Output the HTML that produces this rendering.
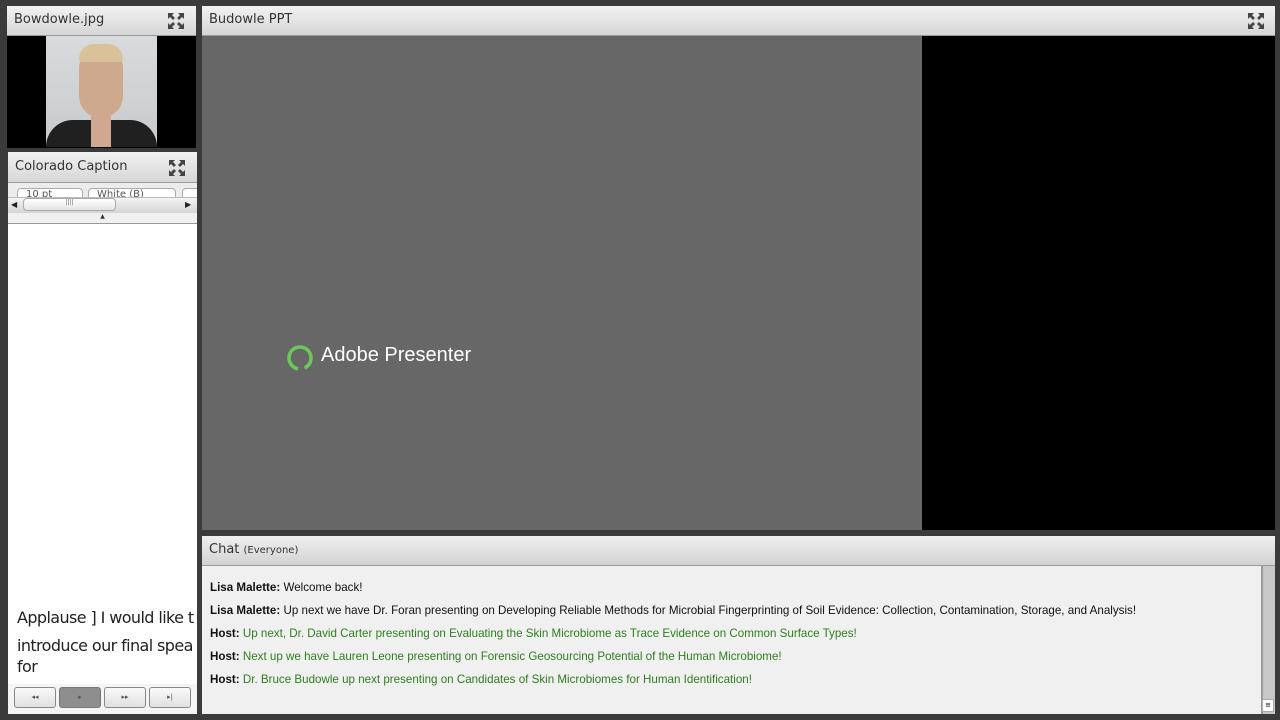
<!DOCTYPE html>
<html><head><style>
body{margin:0;width:1280px;height:720px;background:#3b3b3b;position:relative;overflow:hidden;font-family:"DejaVu Sans","Liberation Sans",sans-serif}
div{position:absolute;box-sizing:border-box}
.hdr{background:linear-gradient(#f2f2f2,#d6d6d6);border-bottom:1px solid #9a9a9a;color:#333;font-size:13px;padding-left:7px;line-height:28px}
.exp{width:18px;height:18px}
.chat{font-family:"Liberation Sans",sans-serif;font-size:11.6px;color:#111;left:8px;white-space:nowrap}
.chat b{font-weight:bold}
.g{color:#2e7d1e}
.btn{top:687px;height:21px;width:42px;border:1px solid #888;border-radius:3px;background:linear-gradient(#fafafa,#e0e0e0);font-size:7px;color:#555;text-align:center;line-height:19px}
</style></head><body>
<svg width="0" height="0" style="position:absolute"><defs><g id="ex"><path d="M1 1h6l-2 2 3 3-2 2-3-3-2 2zM17 1h-6l2 2-3 3 2 2 3-3 2 2zM1 17h6l-2-2 3-3-2-2-3 3-2-2zM17 17h-6l2-2-3-3 2-2 3 3 2-2z" fill="#444"/></g></defs></svg>

<!-- photo panel -->
<div style="left:7px;top:6px;width:189px;height:142px;background:#000">
 <div class="hdr" style="left:0;top:0;width:189px;height:30px;line-height:28px">Bowdowle.jpg</div>
 <svg class="exp" style="position:absolute;left:160px;top:6px" viewBox="0 0 18 18"><use href="#ex"/></svg>
 <div style="left:39px;top:30px;width:111px;height:111px;background:linear-gradient(#d8dadc,#c8cacc)">
  <div style="left:33px;top:12px;width:44px;height:70px;border-radius:22px 22px 24px 24px;background:#cfa98e"></div>
  <div style="left:33px;top:8px;width:44px;height:18px;border-radius:20px 20px 4px 4px;background:#d9c19a"></div>
  <div style="left:0;top:84px;width:111px;height:27px;border-radius:30px 30px 0 0;background:#202020"></div>
  <div style="left:45px;top:80px;width:20px;height:31px;background:#d0a890"></div>
 </div>
</div>

<!-- caption panel -->
<div style="left:8px;top:152px;width:189px;height:562px;background:#fff">
 <div class="hdr" style="left:0;top:0;width:189px;height:31px;line-height:30px">Colorado Caption</div>
 <svg class="exp" style="position:absolute;left:160px;top:7px" viewBox="0 0 18 18"><use href="#ex"/></svg>
 <div style="left:0;top:31px;width:189px;height:30px;background:#ececec;overflow:hidden">
  <div style="left:9px;top:5px;width:66px;height:16px;border:1px solid #aaa;border-radius:4px;background:#fff;font-size:10px;color:#555;padding-left:8px">10 pt</div>
  <div style="left:80px;top:5px;width:88px;height:16px;border:1px solid #aaa;border-radius:4px;background:#fff;font-size:10px;color:#555;padding-left:8px">White (B)</div>
  <div style="left:174px;top:5px;width:20px;height:16px;border:1px solid #aaa;border-radius:4px;background:#fff"></div>
  <div style="left:0;top:14px;width:189px;height:16px;background:linear-gradient(#f4f4f4,#d4d4d4);border-top:1px solid #bbb"></div>
  <div style="left:15px;top:15px;width:93px;height:13px;border:1px solid #aaa;border-radius:4px;background:linear-gradient(#fff,#e4e4e4);font-size:6px;color:#666;text-align:center">||||</div>
  <div style="left:3px;top:17px;font-size:8px;color:#222">◀</div>
  <div style="left:177px;top:17px;font-size:8px;color:#222">▶</div>
 </div>
 <div style="left:0;top:61px;width:189px;height:11px;background:#f0f0f0;border-bottom:1px solid #999;font-size:6px;color:#333;text-align:center">▲</div>
 <div style="left:9px;top:452px;width:180px;font-family:'DejaVu Sans',sans-serif;font-size:16px;color:#222;line-height:28px;white-space:nowrap;overflow:hidden;letter-spacing:-0.6px">Applause ] I would like t<br>introduce our final spea</div>
 <div style="left:9px;top:505px;font-size:16px;color:#222;letter-spacing:-0.6px">for</div>
 <div style="left:0;top:532px;width:189px;height:30px;background:#f4f4f4"></div>
</div>
<div class="btn" style="left:14px">◂◂</div>
<div class="btn" style="left:59px;background:#8e8e8e;border-color:#777">▸</div>
<div class="btn" style="left:104px">▸▸</div>
<div class="btn" style="left:149px">▸|</div>

<!-- PPT panel -->
<div style="left:202px;top:6px;width:1073px;height:524px;background:#000">
 <div class="hdr" style="left:0;top:0;width:1073px;height:30px;line-height:28px">Budowle PPT</div>
 <svg class="exp" style="position:absolute;left:1045px;top:6px" viewBox="0 0 18 18"><use href="#ex"/></svg>
 <div style="left:0;top:30px;width:720px;height:494px;background:#676767">
  <svg style="position:absolute;left:84px;top:308px" width="28" height="28" viewBox="0 0 28 28"><circle cx="14" cy="14" r="11" fill="none" stroke="#6cc85a" stroke-width="3.5" stroke-dasharray="62 7" transform="rotate(100 14 14)"/></svg>
  <div style="left:119px;top:308px;font-family:'Liberation Sans',sans-serif;font-size:20px;color:#fff">Adobe Presenter</div>
 </div>
</div>

<!-- Chat panel -->
<div style="left:202px;top:536px;width:1073px;height:178px;background:#f0f0f0">
 <div class="hdr" style="left:0;top:0;width:1073px;height:30px;line-height:27px;background:linear-gradient(#f0f0f0,#d2d2d2)">Chat <span style="font-size:10px">(Everyone)</span></div>
 <div class="chat" style="top:45px"><b>Lisa Malette:</b> Welcome back!</div>
 <div class="chat" style="top:68px"><b>Lisa Malette:</b> Up next we have Dr. Foran presenting on Developing Reliable Methods for Microbial Fingerprinting of Soil Evidence: Collection, Contamination, Storage, and Analysis!</div>
 <div class="chat" style="top:91px"><b>Host:</b> <span class="g">Up next, Dr. David Carter presenting on Evaluating the Skin Microbiome as Trace Evidence on Common Surface Types!</span></div>
 <div class="chat" style="top:114px"><b>Host:</b> <span class="g">Next up we have Lauren Leone presenting on Forensic Geosourcing Potential of the Human Microbiome!</span></div>
 <div class="chat" style="top:137px"><b>Host:</b> <span class="g">Dr. Bruce Budowle up next presenting on Candidates of Skin Microbiomes for Human Identification!</span></div>
 <div style="left:1059px;top:30px;width:14px;height:148px;background:#c8c8c8;border-left:2px solid #999"></div>
 <div style="left:1060px;top:163px;width:12px;height:13px;background:#fff;border:1px solid #aaa;font-size:7px;text-align:center;line-height:11px">≡</div>
</div>
</body></html>
